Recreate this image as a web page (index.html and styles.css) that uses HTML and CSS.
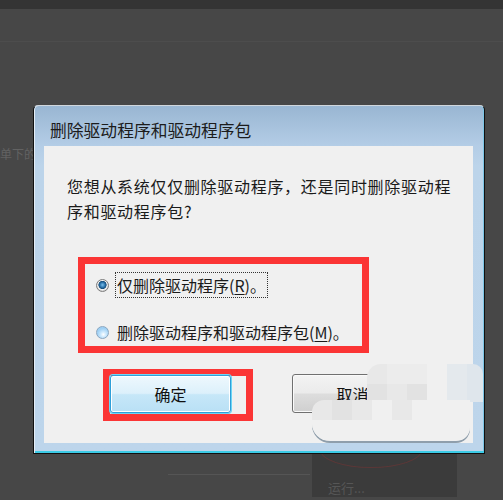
FILE: index.html
```html
<!DOCTYPE html>
<html lang="zh-CN">
<head>
    <meta charset="UTF-8" />
    <title>删除驱动程序和驱动程序包</title>
    <link rel="stylesheet" href="styles.css">
</head>
<body>

<div class="topbar"></div>
<div class="toolbar"></div>

<div class="side-text">单下的</div>

<div class="dialog">
    <div class="dialog-title">删除驱动程序和驱动程序包</div>

    <div class="dialog-body">
        <p class="question">您想从系统仅仅删除驱动程序，还是同时删除驱动程<br>序和驱动程序包?</p>

        <div class="mark options">
            <div class="option">
                <span class="radio on"></span>
                <span class="label focus">仅删除驱动程序(<u>R</u>)。</span>
            </div>
            <div class="option">
                <span class="radio off"></span>
                <span class="label">删除驱动程序和驱动程序包(<u>M</u>)。</span>
            </div>
        </div>

        <div class="buttons">
            <div class="mark ok-mark">
                <button class="btn btn-ok">确定</button>
            </div>
            <button class="btn btn-cancel">取消</button>
        </div>
    </div>
</div>

<!-- 하단 메뉴 잔상 + 워터마크 -->
<div class="menu-ghost">
    <div class="ghost-ring"></div>
    <div class="ghost-text">运行...</div>
</div>
<div class="menu-line"></div>

<div class="watermark wm-top">
    <div class="tile t3"></div><div class="tile t1"></div><div class="tile t1"></div><div class="tile t4"></div><div class="tile t5"></div><div class="tile t6"></div>
    <div class="tile t2"></div><div class="tile t3"></div><div class="tile t2"></div><div class="tile t4"></div><div class="tile t5"></div><div class="tile t6"></div>
</div>
<div class="watermark wm-bottom">
    <div class="tile t3"></div><div class="tile t2"></div><div class="tile t3"></div><div class="tile t4"></div><div class="tile t3"></div><div class="tile t4"></div><div class="tile t4"></div><div class="tile t4"></div>
    <div class="tile t4"></div><div class="tile t4"></div><div class="tile t4"></div><div class="tile t4"></div><div class="tile t4"></div><div class="tile t4"></div><div class="tile t4"></div><div class="tile t4"></div>
</div>

</body>
</html>
```

FILE: styles.css
```css
body {
    margin: 0;
    background: #474747;
    font-family: "Noto Sans CJK SC", "Noto Sans", sans-serif;
    position: relative;
    height: 500px;
    overflow: hidden;
}
.topbar {
    height: 9px;
    background: #343434;
}
.toolbar {
    height: 32px;
    border-bottom: 1px solid #4d4d4d;
}
.side-text {
    position: absolute;
    left: 0;
    top: 145px;
    font-size: 12px;
    color: #626262;
}

.dialog {
    position: relative;
    z-index: 2;
    margin: 63px 0 0 33px;
    width: 452px;
    box-sizing: border-box;
    border: 1px solid #111;
    border-top-color: #d0d6dc;
    border-radius: 5px 5px 0 0;
    padding: 0 11px 10px 10px;
    background: linear-gradient(#99b6d2, #b4cde6 40px, #bcd4ea 60px, #bdd5eb);
    box-shadow: inset 1px 0 #e4eef7, inset 0 -2px #3ccbe6, inset -1px 0 #7cc6e6;
}
.dialog-title {
    height: 40px;
    box-sizing: border-box;
    padding: 15px 0 0 6px;
    font-size: 16.8px;
    line-height: 18px;
    color: #1c1c1c;
}
.dialog-body {
    height: 297px;
    box-sizing: border-box;
    background: #f0f0f0;
    padding: 28px 0 0 0;
    color: #1a1a1a;
}
.question {
    margin: 0 0 33px 23px;
    font-size: 16px;
    line-height: 25px;
    letter-spacing: 0.7px;
    white-space: nowrap;
}

.mark {
    border: 7px solid #fb3535;
}
.options {
    margin-left: 34px;
    width: 277px;
    display: flex;
    flex-direction: column;
    gap: 21px;
    padding-top: 8px;
    height: 74px;
}
.option {
    display: flex;
    align-items: center;
    height: 26px;
    padding-left: 11px;
    gap: 6px;
    font-size: 16px;
}
.label {
    padding: 0 1px;
    line-height: 24px;
    border: 1px solid transparent;
}
.label.focus {
    border: 1px dotted #333;
}
.label u {
    text-underline-offset: 2px;
}
.radio {
    width: 13px;
    height: 13px;
    border-radius: 50%;
    box-sizing: border-box;
    flex: none;
}
.radio.on {
    border: 1px solid #7d7d7d;
    background: radial-gradient(circle at 50% 45%, #7cc0ec 0, #2c74ac 2.5px, #174d7a 3.8px, #f6f6f6 4.4px, #d2d2d2 6px);
}
.radio.off {
    border: 1px solid #8aa6bf;
    background: radial-gradient(circle at 58% 68%, #ffffff 0, #cfeafd 2.5px, #9fd0f4 6px);
}

.buttons {
    display: flex;
    align-items: flex-start;
    margin: 16px 0 0 59px;
    gap: 39px;
}
.ok-mark {
    padding: 0 15px 1px 0;
}
.btn {
    width: 121px;
    height: 38px;
    margin: 0;
    font-family: inherit;
    font-size: 16px;
    color: #111;
    border-radius: 3px;
    padding: 0;
}
.btn-ok {
    margin-top: -1px;
    border: 1px solid #2f9fd8;
    box-shadow: 0 0 0 1px #6ad6f6, inset 0 0 0 1px #ffffff;
    background: linear-gradient(#eef8fd, #dcf0fb 48%, #c6e7f8 52%, #b9e0f5);
}
.btn-cancel {
    margin-top: 5px;
    height: 39px;
    border: 1px solid #707070;
    box-shadow: inset 0 0 0 1px #fafafa;
    background: linear-gradient(#f3f3f3, #ebebeb 48%, #dddddd 52%, #cfcfcf);
}

.menu-ghost {
    position: absolute;
    z-index: 1;
    left: 312px;
    top: 440px;
    width: 145px;
    height: 57px;
    background: #3b3b3b;
    overflow: hidden;
}
.ghost-ring {
    position: absolute;
    left: 8px;
    top: -8px;
    width: 100px;
    height: 34px;
    border: 1px solid rgba(130, 50, 50, 0.45);
    border-radius: 50%;
}
.ghost-text {
    position: absolute;
    left: 16px;
    top: 38px;
    font-size: 13px;
    color: #565656;
}
.menu-line {
    position: absolute;
    left: 168px;
    top: 474px;
    width: 142px;
    height: 1px;
    background: #555;
}

.watermark {
    position: absolute;
    z-index: 3;
    display: grid;
    grid-auto-rows: 20px;
    overflow: hidden;
    filter: blur(0.6px);
}
.wm-top {
    left: 367px;
    top: 364px;
    width: 116px;
    height: 38px;
    grid-template-columns: repeat(6, 20px);
    border-radius: 14px 10px 0 0;
}
.wm-bottom {
    left: 312px;
    top: 400px;
    width: 158px;
    height: 41px;
    grid-template-columns: repeat(8, 20px);
    border-radius: 12px 0 14px 18px;
    box-shadow: 0 2px 0 #8f9eab;
}
.tile.t1 { background: #ececec; }
.tile.t2 { background: #e2e2e2; }
.tile.t3 { background: #e8e8e8; }
.tile.t4 { background: #f0f0f0; }
.tile.t5 { background: #e4e9ed; }
.tile.t6 { background: #dfe6ec; }
```
